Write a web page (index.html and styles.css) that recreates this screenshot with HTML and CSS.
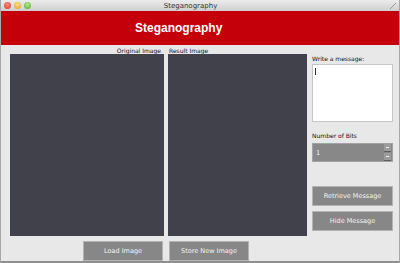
FILE: index.html
```html
<!DOCTYPE html>
<html lang="en">

<head>
    <meta charset="UTF-8">
    <title>Steganography</title>
    <link rel="stylesheet" href="styles.css">
</head>

<body>
    <div class="window">
        <div class="titlebar">
            <div class="lights">
                <span class="light red"></span>
                <span class="light yellow"></span>
                <span class="light green"></span>
            </div>
            <div class="title">Steganography</div>
            <div class="resize"></div>
        </div>

        <div class="header">
            <h1>Steganography</h1>
        </div>

        <div class="main">
            <div class="images">
                <div class="labels">
                    <div class="label original">Original Image</div>
                    <div class="label result">Result Image</div>
                </div>
                <div class="panels">
                    <div class="panel left"></div>
                    <div class="panel right"></div>
                </div>
                <div class="actions">
                    <button class="btn">Load Image</button>
                    <button class="btn">Store New Image</button>
                </div>
            </div>

            <div class="side">
                <div class="label">Write a message:</div>
                <div class="message"><span class="caret"></span></div>

                <div class="label bits">Number of Bits</div>
                <div class="spinner">
                    <span class="value">1</span>
                    <div class="arrows">
                        <span class="arrow"></span>
                        <span class="arrow"></span>
                    </div>
                </div>

                <button class="btn wide first">Retrieve Message</button>
                <button class="btn wide">Hide Message</button>
            </div>
        </div>
    </div>
</body>

</html>
```

FILE: styles.css
```css
body {
    margin: 0;
    font-family: "DejaVu Sans", sans-serif;
    background-color: #e8e8e8;
}

.window {
    width: 400px;
    height: 263px;
    box-sizing: border-box;
    border-left: 1px solid #a9a9a9;
    border-right: 1px solid #a9a9a9;
    border-bottom: 2px solid #8f8f8f;
    overflow: hidden;
}

.titlebar {
    height: 11px;
    display: flex;
    align-items: center;
    background: linear-gradient(#ececec, #cfcfcf);
}

.lights {
    display: flex;
    gap: 3px;
    padding-left: 3px;
}

.light {
    width: 7px;
    height: 7px;
    border-radius: 50%;
}

.red {
    background: radial-gradient(circle at 50% 35%, #ff8a80, #d8332a);
}

.yellow {
    background: radial-gradient(circle at 50% 35%, #ffe08a, #d89a1e);
}

.green {
    background: radial-gradient(circle at 50% 35%, #b6ec8a, #4ea52e);
}

.title {
    flex: 1;
    text-align: center;
    font-size: 7px;
    color: #333;
    margin-right: 40px;
}

.resize {
    width: 6px;
    height: 6px;
    margin-right: 3px;
    background: linear-gradient(135deg, transparent 45%, #9a9a9a 45%, #9a9a9a 55%, transparent 55%);
}

.header {
    height: 34px;
    background-color: #c4000b;
    display: flex;
    align-items: center;
}

.header h1 {
    margin: 0 0 0 134px;
    font-family: "Liberation Sans", sans-serif;
    font-size: 12px;
    font-weight: bold;
    color: white;
}

.main {
    display: flex;
}

.images {
    padding-left: 9px;
}

.labels {
    display: flex;
    height: 9px;
    align-items: flex-end;
}

.label {
    font-size: 6px;
    color: #111;
    line-height: 7px;
}

.labels .original {
    width: 151px;
    text-align: right;
}

.labels .result {
    padding-left: 8px;
}

.panels {
    display: flex;
    gap: 4px;
}

.panel {
    height: 182px;
    background-color: #41414b;
}

.panel.left {
    width: 154px;
}

.panel.right {
    width: 139px;
}

.actions {
    display: flex;
    gap: 6px;
    padding: 5px 0 0 73px;
}

.btn {
    width: 80px;
    height: 20px;
    padding: 0;
    background-color: #878787;
    border: 1px solid #b4b4b4;
    color: #f4f4f4;
    font-family: "DejaVu Sans", sans-serif;
    font-size: 6.5px;
}

.side {
    padding: 10px 0 0 5px;
    width: 81px;
}

.message {
    margin-top: 2px;
    height: 58px;
    background-color: white;
    border: 1px solid #c6c6c6;
    box-sizing: border-box;
    padding: 3px 0 0 2px;
}

.caret {
    display: block;
    width: 1px;
    height: 7px;
    background-color: #333;
}

.bits {
    margin-top: 10px;
}

.spinner {
    margin-top: 4px;
    height: 19px;
    display: flex;
    align-items: center;
    background-color: #888;
    box-sizing: border-box;
    border: 1px solid #a3a3a3;
}

.value {
    flex: 1;
    font-size: 6.5px;
    color: #f4f4f4;
    padding-left: 3px;
}

.arrows {
    display: flex;
    flex-direction: column;
    gap: 1px;
    width: 7px;
    margin-right: 1px;
}

.arrow {
    height: 7px;
    background-color: #9c9c9c;
    border-bottom: 1px solid #5e5e5e;
    position: relative;
}

.arrow::after {
    content: "";
    position: absolute;
    left: 2px;
    top: 3px;
    width: 3px;
    height: 1px;
    background-color: #eee;
}

.wide {
    display: block;
    width: 81px;
    margin-top: 5px;
}

.wide.first {
    margin-top: 24px;
}
```
